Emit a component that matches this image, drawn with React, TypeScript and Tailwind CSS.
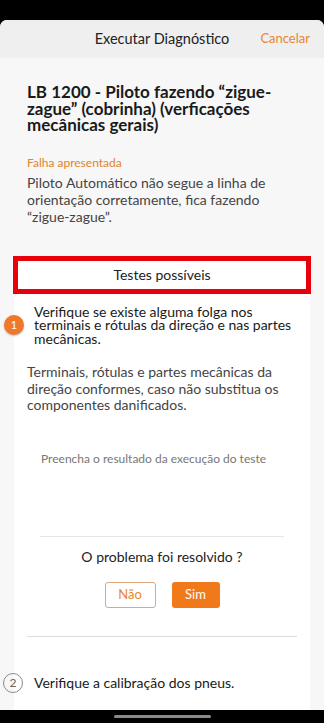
import React from 'react';

function StepBadge({ n, active }: { n: number; active?: boolean }) {
  if (active) {
    return (
      <span className="flex h-[20px] w-[20px] shrink-0 items-center justify-center rounded-full bg-[#f0782a] text-[11px] text-white shadow-[0_1px_2px_rgba(0,0,0,0.25)]">
        {n}
      </span>
    );
  }
  return (
    <span className="flex h-[20px] w-[20px] shrink-0 items-center justify-center rounded-full border-[1.5px] border-[#8a8a8a] text-[12px] text-[#666]">
      {n}
    </span>
  );
}

export default function App() {
  return (
    <div className="flex h-[723px] w-[324px] flex-col overflow-hidden bg-black pt-[20px] font-['Lato','Liberation_Sans',sans-serif]">
      <div className="flex flex-1 flex-col overflow-hidden rounded-t-[7px] bg-[#f7f7f7]">
        {/* header */}
        <div className="relative flex h-[38px] shrink-0 items-center justify-center bg-[#efefef]">
          <span className="text-[14.5px] text-[#222]">Executar Diagnóstico</span>
          <span className="absolute right-[14px] text-[13px] text-[#e8862f]">Cancelar</span>
        </div>

        <div className="px-[27px] pt-[26px]">
          <h1 className="text-[17px] font-bold leading-[16.5px] text-[#1a1a1a]">
            LB 1200 - Piloto fazendo “zigue-zague” (cobrinha) (verficações mecânicas gerais)
          </h1>
          <p className="mt-[22px] text-[12px] leading-[14px] text-[#e0842c]">Falha apresentada</p>
          <p className="mt-[4px] text-[14px] leading-[17px] text-[#444]">
            Piloto Automático não segue a linha de orientação corretamente, fica fazendo “zigue-zague”.
          </p>
        </div>

        <div className="mx-[13px] mt-[31px] flex h-[38px] shrink-0 items-center justify-center border-[5px] border-[#e8000b] bg-white">
          <span className="text-[14px] text-[#222]">Testes possíveis</span>
        </div>

        <div className="ml-[14px] mr-[14px] flex-1 bg-white pt-[11px]">
          <div className="flex items-center gap-[10px] -ml-[10px]">
            <StepBadge n={1} active />
            <p className="text-[14px] leading-[13.5px] text-[#1a1a1a]">
              Verifique se existe alguma folga nos terminais e rótulas da direção e nas partes mecânicas.
            </p>
          </div>

          <p className="mt-[19px] pl-[13px] pr-[8px] text-[14px] leading-[16.5px] text-[#444]">
            Terminais, rótulas e partes mecânicas da direção conformes, caso não substitua os componentes danificados.
          </p>

          <p className="mt-[38px] pl-[27px] text-[12px] leading-[14px] text-[#777]">
            Preencha o resultado da execução do teste
          </p>

          <div className="mx-[26px] mt-[70px] border-t border-[#e6e6e6]" />

          <p className="mt-[11px] text-center text-[14px] leading-[17px] text-[#222]">O problema foi resolvido ?</p>

          <div className="mt-[17px] flex justify-center gap-[16px]">
            <button className="h-[26px] w-[51px] rounded-[3px] border border-[#e0a77a] bg-white text-[13px] text-[#e8862f]">
              Não
            </button>
            <button className="h-[26px] w-[48px] rounded-[3px] bg-[#f07a1a] text-[13px] text-white">Sim</button>
          </div>

          <div className="mx-[13px] mt-[28px] border-t border-[#dcdcdc]" />

          <div className="mt-[36px] flex items-center gap-[11px] -ml-[11px]">
            <StepBadge n={2} />
            <p className="text-[14px] leading-[16px] text-[#1a1a1a]">Verifique a calibração dos pneus.</p>
          </div>
        </div>
      </div>

      <div className="flex h-[13px] shrink-0 items-center justify-center bg-black">
        <span className="h-[3px] w-[97px] rounded-full bg-[#8a8a8a]" />
      </div>
    </div>
  );
}
